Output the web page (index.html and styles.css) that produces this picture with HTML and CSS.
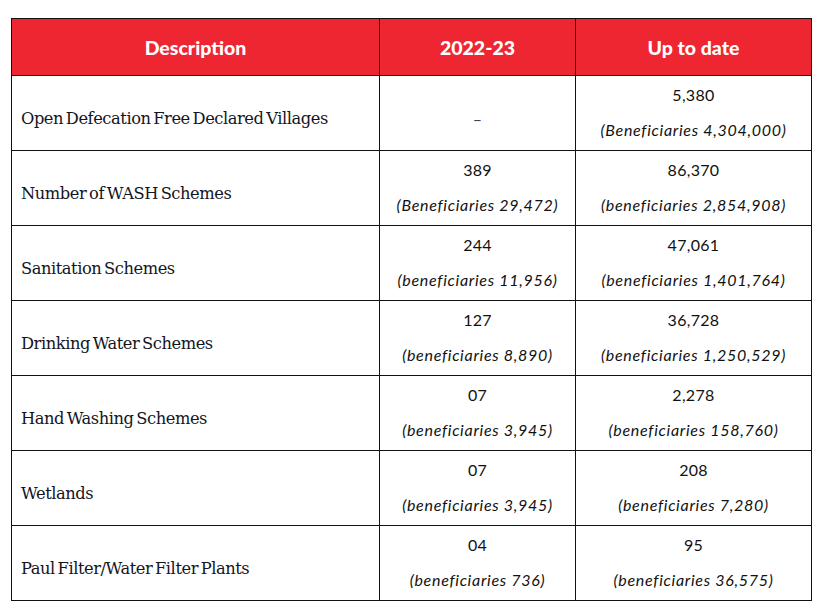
FILE: index.html
```html
<!DOCTYPE html>
<html>
<head>
<meta charset="utf-8">
<link rel="stylesheet" href="styles.css">
</head>
<body>
<table class="wash">
  <colgroup>
    <col class="c-desc">
    <col class="c-year">
    <col class="c-total">
  </colgroup>
  <thead>
    <tr>
      <th>Description</th>
      <th>2022-23</th>
      <th>Up to date</th>
    </tr>
  </thead>
  <tbody>
    <tr>
      <td class="desc">Open Defecation Free Declared Villages</td>
      <td class="val"><div class="dash">–</div></td>
      <td class="val"><div class="num">5,380</div><div class="ben">(Beneficiaries 4,304,000)</div></td>
    </tr>
    <tr>
      <td class="desc">Number of WASH Schemes</td>
      <td class="val"><div class="num">389</div><div class="ben">(Beneficiaries 29,472)</div></td>
      <td class="val"><div class="num">86,370</div><div class="ben">(beneficiaries 2,854,908)</div></td>
    </tr>
    <tr>
      <td class="desc">Sanitation Schemes</td>
      <td class="val"><div class="num">244</div><div class="ben">(beneficiaries 11,956)</div></td>
      <td class="val"><div class="num">47,061</div><div class="ben">(beneficiaries 1,401,764)</div></td>
    </tr>
    <tr>
      <td class="desc">Drinking Water Schemes</td>
      <td class="val"><div class="num">127</div><div class="ben">(beneficiaries 8,890)</div></td>
      <td class="val"><div class="num">36,728</div><div class="ben">(beneficiaries 1,250,529)</div></td>
    </tr>
    <tr>
      <td class="desc">Hand Washing Schemes</td>
      <td class="val"><div class="num">07</div><div class="ben">(beneficiaries 3,945)</div></td>
      <td class="val"><div class="num">2,278</div><div class="ben">(beneficiaries 158,760)</div></td>
    </tr>
    <tr>
      <td class="desc">Wetlands</td>
      <td class="val"><div class="num">07</div><div class="ben">(beneficiaries 3,945)</div></td>
      <td class="val"><div class="num">208</div><div class="ben">(beneficiaries 7,280)</div></td>
    </tr>
    <tr>
      <td class="desc">Paul Filter/Water Filter Plants</td>
      <td class="val"><div class="num">04</div><div class="ben">(beneficiaries 736)</div></td>
      <td class="val"><div class="num">95</div><div class="ben">(beneficiaries 36,575)</div></td>
    </tr>
  </tbody>
</table>
</body>
</html>
```
FILE: styles.css
```css
html, body {
  margin: 0;
  padding: 0;
  background: #ffffff;
}
body {
  padding: 18px 0 0 11px;
}
.wash {
  border-collapse: collapse;
  width: 800px;
  table-layout: fixed;
  color: #111;
}
.c-desc { width: 368px; }
.c-year { width: 196px; }
.c-total { width: 236px; }
.wash th, .wash td {
  border: 1px solid #111;
  padding: 0;
  box-sizing: border-box;
}
.wash thead tr {
  height: 57px;
}
.wash tbody tr {
  height: 75px;
}
.wash th {
  background: #ee2631;
  color: #fff;
  font-family: Lato, "Liberation Sans", sans-serif;
  font-weight: 900;
  font-size: 19.5px;
  text-align: center;
  vertical-align: middle;
  letter-spacing: 0;
}
.wash td {
  vertical-align: top;
}
.desc {
  font-family: "DejaVu Serif", "Liberation Serif", serif;
  font-size: 16.3px;
  letter-spacing: -0.45px;
  word-spacing: -2px;
  line-height: 24px;
  color: #15151f;
  padding: 31px 0 0 9px !important;
}
.val {
  text-align: center;
  font-family: Lato, "Liberation Sans", sans-serif;
  font-size: 16px;
  padding-top: 7px !important;
}
.num {
  line-height: 24px;
  letter-spacing: 0.3px;
}
.ben {
  line-height: 24px;
  margin-top: 11px;
  font-style: italic;
  letter-spacing: 0.7px;
}
.dash {
  line-height: 24px;
  margin-top: 24px;
  color: #444;
}
```
